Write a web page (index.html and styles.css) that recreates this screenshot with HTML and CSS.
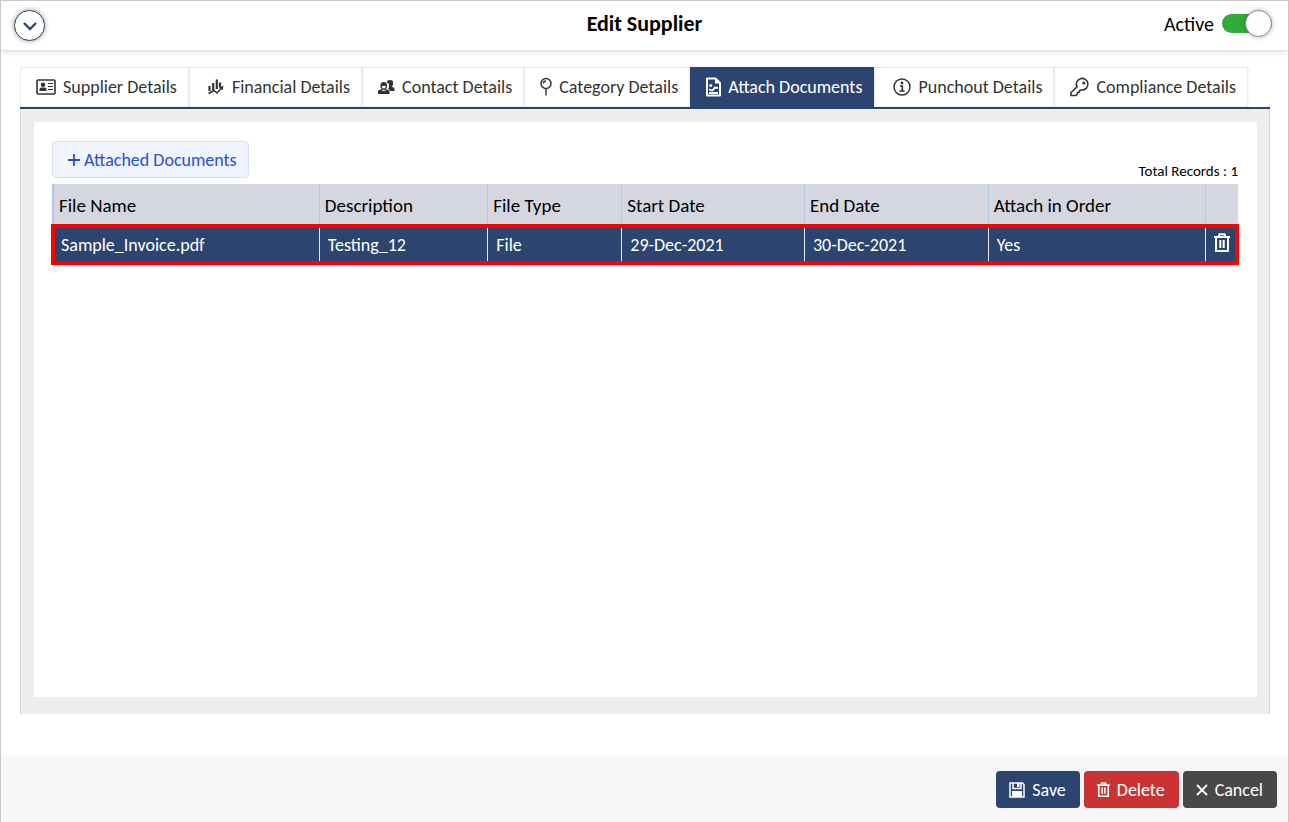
FILE: index.html
```
<!DOCTYPE html>
<html lang="en">
<head>
    <meta charset="UTF-8">
    <title>Edit Supplier</title>
    <link rel="stylesheet" href="styles.css">
</head>
<body>
<header class="top-bar">
    <button class="collapse" type="button" aria-label="Collapse">
        <svg width="14" height="14" viewBox="0 0 14 14"><path d="M1 4l6 6 6-6" fill="none" stroke="#2c4570" stroke-width="2.4"/></svg>
    </button>
    <h1 class="title">Edit Supplier</h1>
    <label class="status">Active <input class="switch" type="checkbox" checked></label>
</header>

<main class="content">
    <nav class="tabs">
        <a class="tab" href="#supplier">
            <svg width="20" height="16" viewBox="0 0 20 16"><rect x="1" y="1" width="18" height="14" rx="1" fill="none" stroke="currentColor" stroke-width="1.6"/><circle cx="7" cy="5.7" r="2.2" fill="currentColor"/><path d="M3.5 12V10.5Q3.5 8.500 5.500 8.500h3q2 0 2 2V12z" fill="currentColor"/><path d="M12 4.500h5M12 7.500h5M12 10.500h5" stroke="currentColor"/></svg>
            Supplier Details
        </a>
        <a class="tab" href="#financial">
            <svg width="20" height="16" viewBox="-3 0 20 16"><path d="M1.500 7v5M5.200 4v7M8.800 .5v9.500M12 3.500v4.500" stroke="currentColor" stroke-width="2.200" fill="none"/><path d="M.5 14.500L6 11.500l3 2.500 4.500-5" stroke="currentColor" stroke-width="1.500" fill="none"/><path d="M11 8l4.500-1-1 4.500z" fill="currentColor"/></svg>
            Financial Details
        </a>
        <a class="tab" href="#contact">
            <svg width="17" height="16" viewBox="0 0 17 16"><path d="M8.500 3q.5-2 3.500-2t3 2v2.500l-1 2.200 2.500 1.300v3h-4l-2.500-2.500 1-1.500V5z" fill="currentColor"/><path d="M2.500 6Q2.500 3 5.700 3T9 6v2.200L7.800 10l3.700 1.600V15H0v-3.400L3.700 10 2.500 8.200z" fill="currentColor"/><path d="M3.700 7.300l3.300-.5.8.7-.8 1.800H4.600z" fill="#fff"/><path d="M4 11.300h3.500" stroke="#fff"/></svg>
            Contact Details
        </a>
        <a class="tab" href="#category">
            <svg width="12" height="20" viewBox="0 0 12 20"><circle cx="6" cy="6.500" r="5" fill="none" stroke="currentColor" stroke-width="1.500"/><path d="M6 11.500v7M3.500 6.500Q3.500 4 6 4" fill="none" stroke="currentColor" stroke-width="1.400"/></svg>
            Category Details
        </a>
        <a class="tab active" href="#documents" aria-current="page">
            <svg width="15" height="20" viewBox="0 0 15 20"><path d="M1 1.500h8.500L14 6v12.500H1z" fill="none" stroke="currentColor" stroke-width="2" stroke-linejoin="round"/><path d="M9 1.500v5h5z" fill="currentColor"/><circle cx="4.800" cy="8.500" r="1.500" fill="currentColor"/><path d="M3 12.500l3.500 1 2.500-3 3 .5M3 16h9" fill="none" stroke="currentColor" stroke-width="1.800"/></svg>
            Attach Documents
        </a>
        <a class="tab" href="#punchout">
            <svg width="21" height="18" viewBox="-3 0 21 18"><circle cx="9" cy="9" r="8" fill="none" stroke="currentColor" stroke-width="1.500"/><circle cx="9" cy="5" r="1.400" fill="currentColor"/><path d="M7 8h2.300v5M6.500 13h5" fill="none" stroke="currentColor" stroke-width="1.700"/></svg>
            Punchout Details
        </a>
        <a class="tab" href="#compliance">
            <svg width="19" height="20" viewBox="0 0 19 20"><path d="M7 10A5.800 5.800 0 1 1 11.500 13L9.500 13.500V15L7.500 15.500V17L6 18.500H1V15.500z" fill="none" stroke="currentColor" stroke-width="1.600" stroke-linejoin="round"/><circle cx="13.800" cy="6" r="1.500" fill="currentColor"/></svg>
            Compliance Details
        </a>
    </nav>

    <section class="panel">
        <div class="sheet">
            <div class="tools">
                <button class="add" type="button">
                    <svg width="12" height="12" viewBox="0 0 12 12"><path d="M6 0v12M0 6h12" stroke="currentColor" stroke-width="1.800"/></svg>
                    Attached Documents
                </button>
                <span class="total">Total Records : 1</span>
            </div>
            <table class="docs">
                <colgroup>
                    <col class="c-name"><col class="c-desc"><col class="c-type"><col class="c-start"><col class="c-end"><col class="c-order"><col class="c-del">
                </colgroup>
                <thead>
                <tr>
                    <th>File Name</th>
                    <th>Description</th>
                    <th>File Type</th>
                    <th>Start Date</th>
                    <th>End Date</th>
                    <th>Attach in Order</th>
                    <th></th>
                </tr>
                </thead>
                <tbody>
                <tr class="selected">
                    <td>Sample_Invoice.pdf</td>
                    <td>Testing_12</td>
                    <td>File</td>
                    <td>29-Dec-2021</td>
                    <td>30-Dec-2021</td>
                    <td>Yes</td>
                    <td class="del">
                        <button class="trash" type="button" aria-label="Delete file">
                            <svg width="16" height="19" viewBox="0 0 16 19"><path d="M0 4h16M4.500 4l1-2.800h5l1 2.800M2 4v14h12V4M6.300 7v8M9.700 7v8" fill="none" stroke="currentColor" stroke-width="2"/></svg>
                        </button>
                    </td>
                </tr>
                </tbody>
            </table>
        </div>
    </section>
</main>

<footer class="actions">
    <button class="btn save" type="button">
        <svg width="16" height="16" viewBox="0 0 16 16"><path d="M1 1h12.500L15 2.500V15H1z" fill="none" stroke="currentColor" stroke-width="1.500"/><path d="M4 1v5.500h8V1" fill="none" stroke="currentColor" stroke-width="1.500"/><path d="M8 1h2.500v4H8zM3 9h10v6H3z" fill="currentColor"/></svg>
        Save
    </button>
    <button class="btn delete" type="button">
        <svg width="13" height="15" viewBox="0 0 16 19"><path d="M0 4h16M4.500 4l1-2.800h5l1 2.800M2 4v14h12V4M6.300 7v8M9.700 7v8" fill="none" stroke="currentColor" stroke-width="2"/></svg>
        Delete
    </button>
    <button class="btn cancel" type="button">
        <svg width="12" height="12" viewBox="0 0 12 12"><path d="M1 1l10 10M11 1L1 11" stroke="currentColor" stroke-width="1.800"/></svg>
        Cancel
    </button>
</footer>
</body>
</html>
```
FILE: styles.css
```
* {
    box-sizing: border-box;
}

body {
    display: flex;
    flex-direction: column;
    min-height: 100vh;
    margin: 0;
    border: 1px solid #c8c8cb;
    border-bottom: none;
    background-color: #fff;
    font-family: Carlito, Lato, "Noto Sans", sans-serif;
    font-size: 18px;
    color: #000;
}

button {
    font: inherit;
    cursor: pointer;
}

svg {
    flex: none;
}

.top-bar {
    display: grid;
    grid-template-columns: 1fr auto 1fr;
    align-items: center;
    height: 50px;
    padding: 0 13px;
    border-bottom: 1px solid #e2e2e2;
    box-shadow: 0 2px 5px rgba(0, 0, 0, .1);
}

.collapse {
    display: flex;
    align-items: center;
    justify-content: center;
    width: 31px;
    height: 31px;
    padding: 0;
    border: 1px solid #2c4570;
    border-radius: 50%;
    background-color: #fff;
    box-shadow: 0 0 5px rgba(0, 0, 0, .4);
}

.title {
    margin: 0;
    padding-bottom: 4px;
    font-size: 22px;
    font-weight: bold;
}

.status {
    display: flex;
    align-items: center;
    justify-self: end;
    gap: 8px;
    padding: 0 3px 4px 0;
    font-size: 20px;
}

.switch {
    display: flex;
    align-items: center;
    justify-content: flex-end;
    width: 50px;
    height: 19px;
    margin: 0;
    border-radius: 10px;
    background-color: #ccc;
    appearance: none;
}

.switch:checked {
    background-color: #30ad38;
}

.switch::before {
    content: "";
    width: 25px;
    height: 25px;
    flex: none;
    border: 1px solid #7c8bb5;
    border-radius: 50%;
    background-color: #fff;
    box-shadow: 0 0 5px rgba(0, 0, 0, .3);
}

.content {
    display: flex;
    flex: 1;
    flex-direction: column;
    padding: 16px 18px 45px 19px;
}

.tabs {
    display: flex;
    border-bottom: 2px solid #2c4570;
}

.tab {
    display: flex;
    align-items: center;
    gap: 7px;
    height: 40px;
    padding: 0 11px 0 15px;
    border: 1px solid #ececec;
    box-shadow: 1px 0 2px rgba(0, 0, 0, .06);
    color: #333;
    text-decoration: none;
    white-space: nowrap;
}

.tab.active {
    border-color: #2c4570;
    background-color: #2c4570;
    color: #fff;
}

.panel {
    display: flex;
    flex: 1;
    padding: 13px 12px 17px 13px;
    border: solid #d6d6d6;
    border-width: 0 1px;
    background-color: #ededed;
}

.sheet {
    flex: 1;
    padding: 19px 19px 19px 18px;
    background-color: #fff;
}

.tools {
    display: flex;
    align-items: flex-end;
    justify-content: space-between;
    height: 43px;
}

.add {
    display: flex;
    align-items: center;
    align-self: flex-start;
    gap: 4px;
    height: 37px;
    padding: 0 11px 0 15px;
    border: 1px solid #d5defb;
    border-radius: 4px;
    background-color: #f0f4ff;
    color: #2a4fd8;
}

.total {
    padding-bottom: 4px;
    font-size: 15px;
}

.docs {
    width: 100%;
    table-layout: fixed;
    border-collapse: separate;
    border-spacing: 0;
}

.c-name { width: 22.5%; }
.c-desc { width: 14.2%; }
.c-type { width: 11.3%; }
.c-start { width: 15.4%; }
.c-end { width: 15.5%; }
.c-order { width: 18.3%; }
.c-del { width: 2.8%; }

.docs th {
    height: 41px;
    padding: 2px 5px 0;
    border-left: 1px solid #b5c8e3;
    background-color: #d4d7e0;
    font-size: 19px;
    font-weight: normal;
    text-align: left;
}

.docs th:first-child {
    border-left-width: 2px;
}

.docs td {
    height: 39px;
    padding: 0 8px;
    border-left: 1px solid #e6e9ef;
    background-color: #2c4570;
    color: #fff;
}

.docs .selected {
    outline: 4px solid #f00;
    outline-offset: -3px;
}

.docs .del {
    padding: 0;
    text-align: center;
}

.trash {
    display: inline-flex;
    padding: 0;
    border: none;
    background: none;
    color: #fff;
}

.actions {
    display: flex;
    align-items: flex-start;
    justify-content: flex-end;
    gap: 4px;
    padding: 12px 11px 14px;
    background-color: #f7f7f7;
    box-shadow: 0 -1px 3px rgba(0, 0, 0, .08);
}

.btn {
    display: flex;
    align-items: center;
    gap: 7px;
    height: 37px;
    padding: 0 14px 0 13px;
    border: none;
    border-radius: 4px;
    color: #fff;
}

.save {
    background-color: #2c4570;
}

.delete {
    background-color: #cb3234;
}

.cancel {
    background-color: #484848;
}
```
